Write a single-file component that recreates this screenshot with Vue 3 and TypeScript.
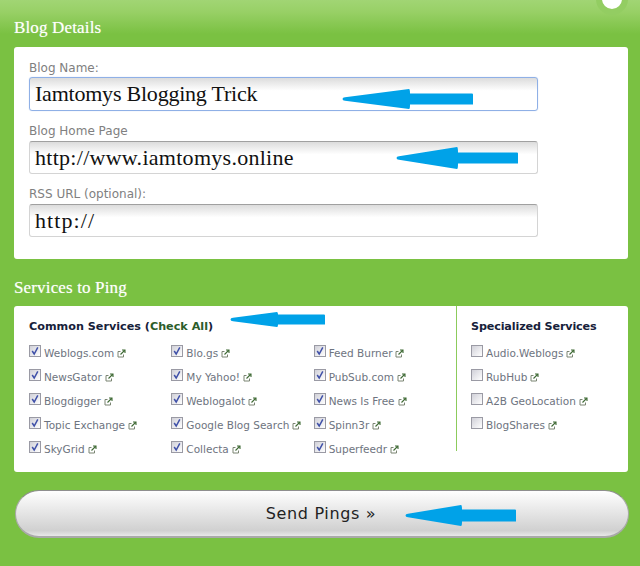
<script setup lang="ts">
interface Service { name: string; checked: boolean }
const fields = [
  { label: 'Blog Name:', value: 'Iamtomys Blogging Trick', focus: true, spacing: -0.22 },
  { label: 'Blog Home Page', value: 'http://www.iamtomys.online', focus: false, spacing: 0.28 },
  { label: 'RSS URL (optional):', value: 'http://', focus: false, spacing: 1.1 },
]
const columns: string[][] = [
  ['Weblogs.com', 'NewsGator', 'Blogdigger', 'Topic Exchange', 'SkyGrid'],
  ['Blo.gs', 'My Yahoo!', 'Weblogalot', 'Google Blog Search', 'Collecta'],
  ['Feed Burner', 'PubSub.com', 'News Is Free', 'Spinn3r', 'Superfeedr'],
]
const common: Service[][] = columns.map(c => c.map(name => ({ name, checked: true })))
const special: Service[] = ['Audio.Weblogs', 'RubHub', 'A2B GeoLocation', 'BlogShares'].map(name => ({ name, checked: false }))
const arrows = [
  { x: 342, cy: 98.5, w: 131, base: 67, head: 10, tail: 5.5 },
  { x: 396, cy: 158, w: 122, base: 61, head: 11, tail: 5.5 },
  { x: 230, cy: 319, w: 95, base: 47, head: 7.5, tail: 5 },
  { x: 405, cy: 515, w: 111, base: 56, head: 10.5, tail: 6 },
]
function arrowPath(a: { w: number; base: number; head: number; tail: number }): string {
  const c = a.head + 1
  return `M0.5 ${c} Q0.5 ${c - 1.5} 3 ${c - 1.8} L${a.base} ${c - a.head} Q${a.base + 1} ${c - a.head} ${a.base + 1} ${c - a.tail} L${a.w - 1} ${c - a.tail} Q${a.w} ${c - a.tail} ${a.w} ${c - a.tail + 1} L${a.w} ${c + a.tail} L${a.base + 1} ${c + a.tail} Q${a.base + 1} ${c + a.head} ${a.base} ${c + a.head} L3 ${c + 1.8} Q0.5 ${c + 1.5} 0.5 ${c} Z`
}
</script>

<template>
  <div class="page">
    <div class="topglow"></div>
    <div class="knob"></div>

    <h2 class="heading first">Blog Details</h2>
    <section class="panel details">
      <div v-for="f in fields" :key="f.label" class="field">
        <div class="label">{{ f.label }}</div>
        <div class="input" :class="{ focus: f.focus }" :style="{ letterSpacing: f.spacing + 'px' }">{{ f.value }}</div>
      </div>
    </section>

    <h2 class="heading second">Services to Ping</h2>
    <section class="panel services">
      <div class="common">
        <h3 class="title">Common Services (<a class="checkall">Check All</a>)</h3>
        <div class="cols">
          <ul v-for="(col, i) in common" :key="i" class="list">
            <li v-for="s in col" :key="s.name" class="item">
              <span class="box">
                <svg v-if="s.checked" width="10" height="10" viewBox="0 0 10 10"><path d="M2.2 5 L4.2 8 L7.8 1.4" fill="none" stroke="#3f50a8" stroke-width="1.5"/></svg>
              </span>
              <span class="name">{{ s.name }}</span>
              <svg class="ext" width="9" height="9" viewBox="0 0 9 9"><path d="M6.5 5.5V8H1V2.5H3.5" fill="none" stroke="#7a8472" stroke-width="1"/><path d="M3.5 5.5L7.5 1.5M5 1H8V4" fill="none" stroke="#3f6a35" stroke-width="1.1"/></svg>
            </li>
          </ul>
        </div>
      </div>
      <div class="special">
        <h3 class="title tight">Specialized Services</h3>
        <ul class="list">
          <li v-for="s in special" :key="s.name" class="item">
            <span class="box"></span>
            <span class="name">{{ s.name }}</span>
            <svg class="ext" width="9" height="9" viewBox="0 0 9 9"><path d="M6.5 5.5V8H1V2.5H3.5" fill="none" stroke="#7a8472" stroke-width="1"/><path d="M3.5 5.5L7.5 1.5M5 1H8V4" fill="none" stroke="#3f6a35" stroke-width="1.1"/></svg>
          </li>
        </ul>
      </div>
    </section>

    <button class="send" type="button">Send Pings »</button>

    <svg
      v-for="a in arrows"
      :key="a.x"
      class="arrow"
      :style="{ left: a.x + 'px', top: a.cy - a.head - 1 + 'px' }"
      :width="a.w + 1"
      :height="2 * a.head + 2"
    >
      <path :d="arrowPath(a)" fill="#00a2e8"/>
    </svg>
  </div>
</template>

<style>
html, body { margin: 0; padding: 0; background: #7ac142; }
</style>

<style scoped>
.page {
  position: relative;
  width: 640px;
  height: 566px;
  box-sizing: border-box;
  padding: 0 12px 0 14px;
  overflow: hidden;
  background: #7ac142;
  font-family: "DejaVu Sans", sans-serif;
}
.topglow {
  position: absolute;
  left: 0; right: 0; top: 0;
  height: 34px;
  background: linear-gradient(#a1d574, #98d066 35%, #7ac142);
}
.knob {
  position: absolute;
  left: 596px; top: -17px;
  width: 32px; height: 32px;
  box-sizing: border-box;
  border: 6px solid #93cd62;
  border-radius: 50%;
  background: #fff;
}
.heading {
  position: relative;
  margin: 0;
  font: 400 17px/20px "Liberation Serif", serif;
  letter-spacing: 0.15px;
  color: #fff;
  text-shadow: 0 0 1px rgba(255, 255, 255, 0.5);
}
.heading.first { padding-top: 18px; height: 29px; }
.heading.second { padding-top: 19px; height: 28px; }
.panel {
  position: relative;
  background: #fff;
  border-radius: 3px;
  box-sizing: border-box;
}
.details {
  height: 212px;
  padding: 12px 15px 0;
}
.field { margin-bottom: 11px; }
.label {
  font-size: 12px;
  line-height: 18px;
  color: #808080;
}
.field + .field .label { height: 19px; }
.input {
  box-sizing: border-box;
  width: 509px;
  height: 34px;
  padding-left: 5px;
  border: 1px solid #d4d4d4;
  border-top-color: #a0a0a0;
  border-radius: 3px;
  font: 22px/32px "Liberation Serif", serif;
  color: #111;
  background: linear-gradient(#dcdcdc, #fff 40%);
}
.field + .field .input { height: 33px; line-height: 31px; }
.input.focus {
  border: 1px solid #8fb0e6;
  box-shadow: 0 0 1px #a8c4f0;
}
.services {
  display: flex;
  height: 166px;
}
.common {
  width: 443px;
  height: 145px;
  box-sizing: border-box;
  padding: 13px 0 0 15px;
  border-right: 1px solid #8ccb5c;
}
.special {
  padding: 13px 0 0 14px;
}
.title {
  margin: 0 0 6px;
  font: 700 11.2px/16px "DejaVu Sans", sans-serif;
  color: #16213a;
  height: 16px;
}
.title.tight { letter-spacing: -0.15px; }
.checkall { color: #2c5d2a; }
.cols { display: flex; }
.cols .list { width: 142.5px; }
.list { list-style: none; margin: 0; padding: 0; }
.item {
  display: flex;
  align-items: center;
  height: 24px;
  font-size: 10.5px;
  color: #6e7480;
  white-space: nowrap;
}
.box {
  flex: none;
  box-sizing: border-box;
  display: flex;
  align-items: center;
  justify-content: center;
  width: 12px;
  height: 12px;
  margin: -4px 3px 0 0;
  border: 1px solid #9a9aa4;
  background: linear-gradient(135deg, #d0d0d8, #fff);
}
.ext { flex: none; margin-left: 3px; }
.send {
  display: block;
  box-sizing: border-box;
  width: 614px;
  height: 48px;
  margin: 18px 0 0 1px;
  padding: 0 2px 0 0;
  border: 1px solid #a9a9a9;
  border-top-color: #8f8f8f;
  border-bottom: 2px solid #a9a9a9;
  border-radius: 24px;
  background: linear-gradient(#fff, #d0d0d0 88%, #e8e8e8);
  font: 16px/1 "DejaVu Sans", sans-serif;
  letter-spacing: 0.65px;
  color: #222;
}
.arrow { position: absolute; }
</style>
